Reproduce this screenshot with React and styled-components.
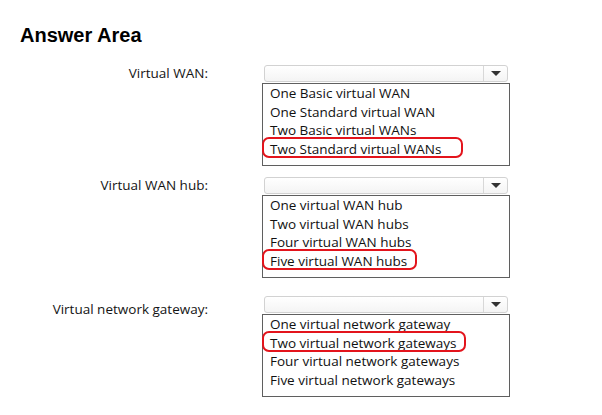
import React from "react";
import styled, { createGlobalStyle } from "styled-components";

const questions = [
  {
    label: "Virtual WAN:",
    top: 0,
    labelShift: 0,
    options: [
      "One Basic virtual WAN",
      "One Standard virtual WAN",
      "Two Basic virtual WANs",
      "Two Standard virtual WANs",
    ],
    marked: 3,
    markWidth: 201,
  },
  {
    label: "Virtual WAN hub:",
    top: 11,
    labelShift: 0,
    options: [
      "One virtual WAN hub",
      "Two virtual WAN hubs",
      "Four virtual WAN hubs",
      "Five virtual WAN hubs",
    ],
    marked: 3,
    markWidth: 155,
  },
  {
    label: "Virtual network gateway:",
    top: 18,
    labelShift: 5,
    options: [
      "One virtual network gateway",
      "Two virtual network gateways",
      "Four virtual network gateways",
      "Five virtual network gateways",
    ],
    marked: 1,
    markWidth: 204,
  },
];

const App = () => {
  return (
    <Page>
      <GlobalStyle />
      <Title>Answer Area</Title>
      <Form>
        {questions.map((q) => (
          <Row key={q.label} $top={q.top}>
            <Label $shift={q.labelShift}>{q.label}</Label>
            <Control>
              <Select>
                <Arrow />
              </Select>
              <List>
                {q.options.map((opt, i) => (
                  <Option key={opt}>
                    {i === q.marked ? (
                      <Marked $w={q.markWidth}>{opt}</Marked>
                    ) : (
                      opt
                    )}
                  </Option>
                ))}
              </List>
            </Control>
          </Row>
        ))}
      </Form>
    </Page>
  );
};

export default App;

const GlobalStyle = createGlobalStyle`
  body {
    margin: 0;
    background: #ffffff;
  }
`;

const Page = styled.div`
  width: 602px;
  height: 415px;
  padding: 24px 0 0 20px;
  box-sizing: border-box;
  font-family: "Open Sans", Lato, sans-serif;
  color: #111111;
`;

const Title = styled.h1`
  margin: 0;
  font-family: "Liberation Sans", Arial, sans-serif;
  font-size: 20px;
  line-height: 23px;
  font-weight: bold;
  color: #000000;
`;

const Form = styled.div`
  display: flex;
  flex-direction: column;
  margin-top: 18px;
`;

const Row = styled.div`
  display: grid;
  grid-template-columns: 242px 248px;
  margin-top: ${(p) => p.$top}px;
`;

const Label = styled.div`
  padding: ${(p) => p.$shift}px 54px 0 0;
  text-align: right;
  font-size: 13.5px;
  line-height: 17px;
  color: #141414;
`;

const Control = styled.div`
  display: flex;
  flex-direction: column;
`;

const Select = styled.div`
  margin: 0 2px 1px;
  height: 17px;
  border: 1px solid #d2d2d2;
  border-radius: 3px;
  background: linear-gradient(#ffffff, #f4f4f4);
  box-sizing: border-box;
  display: flex;
  justify-content: flex-end;
`;

const Arrow = styled.div`
  width: 23px;
  border-left: 1px solid #d8d8d8;
  display: flex;
  align-items: center;
  justify-content: center;

  &::before {
    content: "";
    border-left: 5px solid transparent;
    border-right: 5px solid transparent;
    border-top: 5px solid #333333;
  }
`;

const List = styled.div`
  height: 83px;
  border: 1.5px solid #5f5f5f;
  box-sizing: border-box;
  padding: 0 0 0 7px;
`;

const Option = styled.div`
  font-size: 13.5px;
  line-height: 18.5px;
  white-space: nowrap;
  color: #111111;
`;

const Marked = styled.span`
  position: relative;

  &::after {
    content: "";
    position: absolute;
    left: -8px;
    top: -3px;
    width: ${(p) => p.$w}px;
    height: 21px;
    border: 2px solid #e3141c;
    border-radius: 7px;
    box-sizing: border-box;
  }
`;
